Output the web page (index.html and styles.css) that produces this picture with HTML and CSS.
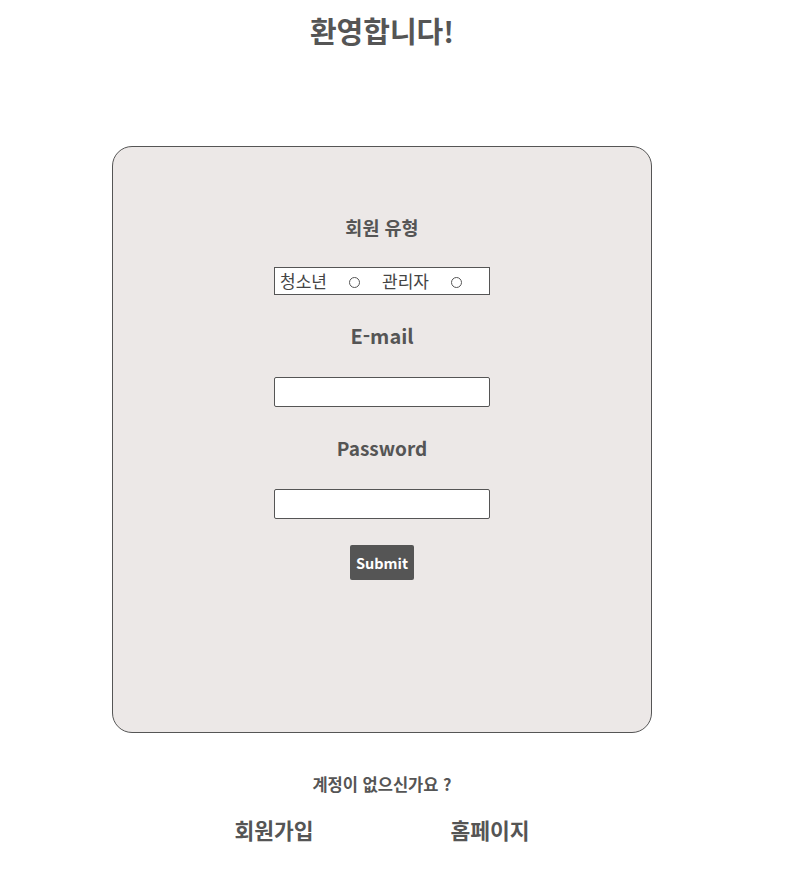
FILE: index.html
```html
<!DOCTYPE html>
<html lang="ko">
<head>
<meta charset="utf-8">
<title>로그인</title>
<link rel="stylesheet" href="styles.css">
</head>
<body>
<div class="page">
  <h1 class="title">환영합니다!</h1>
  <form class="card" onsubmit="return false">
    <div class="label label-sm">회원 유형</div>
    <div class="types">
      <label class="type">청소년<span class="radio"></span></label>
      <label class="type">관리자<span class="radio"></span></label>
    </div>
    <div class="label">E-mail</div>
    <input class="field" type="text">
    <div class="label label-pw">Password</div>
    <input class="field" type="password">
    <button class="submit" type="submit">Submit</button>
  </form>
  <p class="ask">계정이 없으신가요 ?</p>
  <div class="links">
    <a class="link" href="#">회원가입</a>
    <a class="link" href="#">홈페이지</a>
  </div>
</div>
</body>
</html>
```
FILE: styles.css
```css
* { box-sizing: border-box; }
body {
  margin: 0;
  background: #fff;
  font-family: "Noto Sans CJK KR", "Noto Sans", sans-serif;
  color: #555;
}
.page {
  width: 748px;
  margin-left: 8px;
  display: flex;
  flex-direction: column;
  align-items: center;
}
.title {
  margin: 10px 0 0;
  font-size: 29px;
  line-height: 40px;
  font-weight: 700;
  color: #555;
}
.card {
  margin-top: 96px;
  width: 540px;
  height: 587px;
  border: 1px solid #555;
  border-radius: 20px;
  background: #ece8e7;
  padding-top: 67px;
  display: flex;
  flex-direction: column;
  align-items: center;
  gap: 27px;
}
.label {
  font-size: 20px;
  line-height: 28px;
  font-weight: 700;
  color: #555;
}
.label-sm {
  font-size: 18.5px;
  line-height: 26px;
}
.label-pw {
  font-size: 19px;
}
.types {
  width: 216px;
  height: 28px;
  background: #fff;
  border: 1px solid #555;
  display: flex;
  align-items: center;
  padding-left: 5px;
}
.type {
  display: flex;
  align-items: center;
  font-size: 17px;
  line-height: 24px;
  color: #444;
  gap: 22px;
  width: 102px;
}
.radio {
  width: 11px;
  height: 11px;
  border: 1px solid #555;
  border-radius: 50%;
  margin-top: 2px;
}
.field {
  width: 216px;
  height: 30px;
  border: 1px solid #555;
  border-radius: 2px;
  background: #fff;
  margin: 0;
}
.submit {
  margin-top: -1px;
  width: 64px;
  height: 35px;
  border: none;
  border-radius: 2px;
  background: #555;
  color: #fff;
  font-family: inherit;
  font-size: 14.5px;
  font-weight: 700;
  padding: 0;
}
.ask {
  margin: 39px 0 0;
  font-size: 16.5px;
  line-height: 24px;
  font-weight: 700;
  color: #555;
}
.links {
  margin-top: 20px;
  width: 432px;
  display: flex;
}
.link {
  flex: 1;
  text-align: center;
  font-size: 21.5px;
  line-height: 28px;
  font-weight: 700;
  color: #555;
  text-decoration: none;
}
```
